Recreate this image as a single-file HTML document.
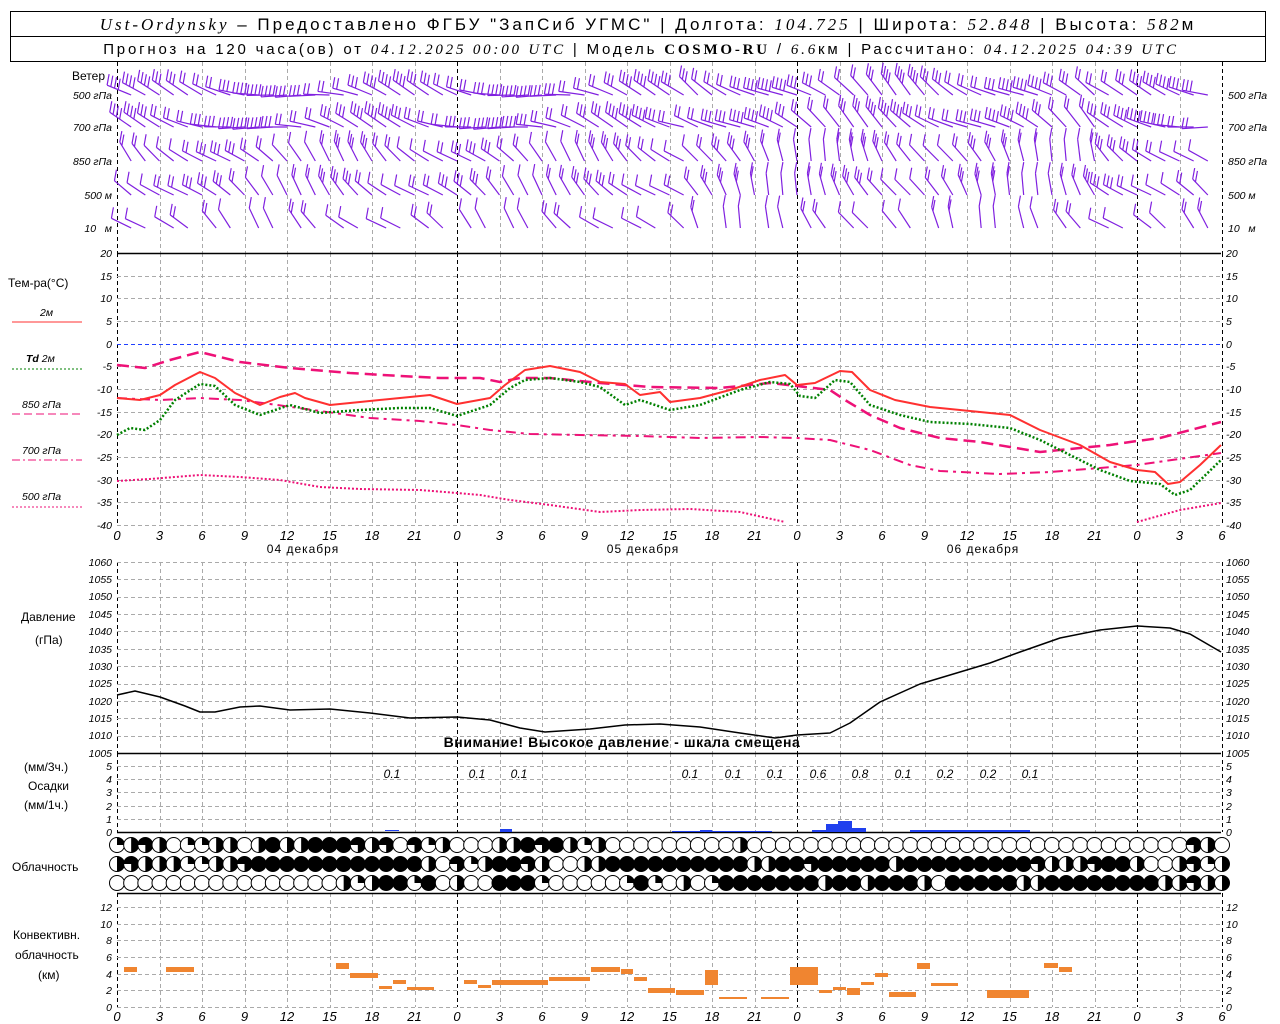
<!DOCTYPE html>
<html><head><meta charset="utf-8"><style>
body{margin:0;background:#fff}
svg{display:block;font-family:"Liberation Sans",sans-serif}
.t{font-size:12px;fill:#000}
.n{font-size:10.5px;font-style:italic;fill:#000;font-family:"Liberation Sans",sans-serif}
.l{text-anchor:end}
.x{font-size:13px;font-style:italic;text-anchor:middle;fill:#000}
.p{font-size:12px;font-style:italic;text-anchor:middle}
</style></head><body>
<svg id="s" width="1280" height="1024" xmlns="http://www.w3.org/2000/svg">
<rect x="10.5" y="11.5" width="1255" height="50" fill="none" stroke="#000"/>
<line x1="10" y1="36.5" x2="1266" y2="36.5" stroke="#000"/>
<text x="648" y="30" text-anchor="middle" style="font-size:17px;letter-spacing:3px"><tspan font-style="italic" font-family="Liberation Serif">Ust-Ordynsky</tspan> – Предоставлено ФГБУ "ЗапСиб УГМС" | Долгота: <tspan font-style="italic" font-family="Liberation Serif">104.725</tspan> | Широта: <tspan font-style="italic" font-family="Liberation Serif">52.848</tspan> | Высота: <tspan font-style="italic" font-family="Liberation Serif">582</tspan>м</text>
<text x="641" y="54" text-anchor="middle" style="font-size:15px;letter-spacing:2.8px"><tspan>Прогноз на 120 часа(ов) от </tspan><tspan font-style="italic" font-family="Liberation Serif">04.12.2025 00:00 UTC</tspan> | Модель <tspan font-weight="bold" font-family="Liberation Serif">COSMO-RU</tspan> / <tspan font-style="italic" font-family="Liberation Serif">6.6</tspan>км | Рассчитано: <tspan font-style="italic" font-family="Liberation Serif">04.12.2025 04:39 UTC</tspan></text>
<g id="g"></g>
<text class="t" x="72" y="80">Ветер</text>
<text class="n l" x="112" y="99">500 гПа</text><text class="n l" x="112" y="131">700 гПа</text><text class="n l" x="112" y="165">850 гПа</text><text class="n l" x="112" y="199">500 м</text><text class="n l" x="112" y="232">10 &#160; м</text>
<text class="n" x="1228" y="99">500 гПа</text><text class="n" x="1228" y="131">700 гПа</text><text class="n" x="1228" y="165">850 гПа</text><text class="n" x="1228" y="199">500 м</text><text class="n" x="1228" y="232">10 &#160; м</text>
<text class="t" x="8" y="287">Тем-ра(°C)</text>
<text class="n" x="40" y="316">2м</text>
<text class="n" x="26" y="362"><tspan font-weight="bold">Td</tspan> 2м</text>
<text class="n" x="22" y="408">850 гПа</text>
<text class="n" x="22" y="454">700 гПа</text>
<text class="n" x="22" y="500">500 гПа</text>
<line x1="12" y1="322" x2="82" y2="322" stroke="#ff3030"/>
<line x1="12" y1="369" x2="82" y2="369" stroke="#008000" stroke-dasharray="2,2"/>
<line x1="12" y1="414" x2="82" y2="414" stroke="#ee1177" stroke-dasharray="8,4"/>
<line x1="12" y1="460" x2="82" y2="460" stroke="#ee1177" stroke-dasharray="8,3,2,3"/>
<line x1="12" y1="507" x2="82" y2="507" stroke="#ee1177" stroke-dasharray="2,2"/>
<g class="n">
<text class="l" x="112" y="257">20</text><text class="l" x="112" y="280">15</text><text class="l" x="112" y="302">10</text><text class="l" x="112" y="325">5</text><text class="l" x="112" y="348">0</text><text class="l" x="112" y="370">-5</text><text class="l" x="112" y="393">-10</text><text class="l" x="112" y="416">-15</text><text class="l" x="112" y="438">-20</text><text class="l" x="112" y="461">-25</text><text class="l" x="112" y="484">-30</text><text class="l" x="112" y="506">-35</text><text class="l" x="112" y="529">-40</text>
<text x="1226" y="257">20</text><text x="1226" y="280">15</text><text x="1226" y="302">10</text><text x="1226" y="325">5</text><text x="1226" y="348">0</text><text x="1226" y="370">-5</text><text x="1226" y="393">-10</text><text x="1226" y="416">-15</text><text x="1226" y="438">-20</text><text x="1226" y="461">-25</text><text x="1226" y="484">-30</text><text x="1226" y="506">-35</text><text x="1226" y="529">-40</text>
<text class="l" x="112" y="566">1060</text><text class="l" x="112" y="583">1055</text><text class="l" x="112" y="600">1050</text><text class="l" x="112" y="618">1045</text><text class="l" x="112" y="635">1040</text><text class="l" x="112" y="653">1035</text><text class="l" x="112" y="670">1030</text><text class="l" x="112" y="687">1025</text><text class="l" x="112" y="705">1020</text><text class="l" x="112" y="722">1015</text><text class="l" x="112" y="739">1010</text><text class="l" x="112" y="757">1005</text>
<text x="1226" y="566">1060</text><text x="1226" y="583">1055</text><text x="1226" y="600">1050</text><text x="1226" y="618">1045</text><text x="1226" y="635">1040</text><text x="1226" y="653">1035</text><text x="1226" y="670">1030</text><text x="1226" y="687">1025</text><text x="1226" y="705">1020</text><text x="1226" y="722">1015</text><text x="1226" y="739">1010</text><text x="1226" y="757">1005</text>
<text class="l" x="112" y="770">5</text><text class="l" x="112" y="783">4</text><text class="l" x="112" y="796">3</text><text class="l" x="112" y="810">2</text><text class="l" x="112" y="823">1</text><text class="l" x="112" y="836">0</text>
<text x="1226" y="770">5</text><text x="1226" y="783">4</text><text x="1226" y="796">3</text><text x="1226" y="810">2</text><text x="1226" y="823">1</text><text x="1226" y="836">0</text>
<text class="l" x="112" y="911">12</text><text class="l" x="112" y="928">10</text><text class="l" x="112" y="944">8</text><text class="l" x="112" y="961">6</text><text class="l" x="112" y="978">4</text><text class="l" x="112" y="994">2</text><text class="l" x="112" y="1011">0</text>
<text x="1226" y="911">12</text><text x="1226" y="928">10</text><text x="1226" y="944">8</text><text x="1226" y="961">6</text><text x="1226" y="978">4</text><text x="1226" y="994">2</text><text x="1226" y="1011">0</text>
</g>
<g class="x">
<text x="117" y="540">0</text><text x="159.5" y="540">3</text><text x="202" y="540">6</text><text x="244.5" y="540">9</text><text x="287" y="540">12</text><text x="329.5" y="540">15</text><text x="372" y="540">18</text><text x="414.5" y="540">21</text><text x="457" y="540">0</text><text x="499.5" y="540">3</text><text x="542" y="540">6</text><text x="584.5" y="540">9</text><text x="627" y="540">12</text><text x="669.5" y="540">15</text><text x="712" y="540">18</text><text x="754.5" y="540">21</text><text x="797" y="540">0</text><text x="839.5" y="540">3</text><text x="882" y="540">6</text><text x="924.5" y="540">9</text><text x="967" y="540">12</text><text x="1009.5" y="540">15</text><text x="1052" y="540">18</text><text x="1094.5" y="540">21</text><text x="1137" y="540">0</text><text x="1179.5" y="540">3</text><text x="1222" y="540">6</text>
<text x="117" y="1021">0</text><text x="159.5" y="1021">3</text><text x="202" y="1021">6</text><text x="244.5" y="1021">9</text><text x="287" y="1021">12</text><text x="329.5" y="1021">15</text><text x="372" y="1021">18</text><text x="414.5" y="1021">21</text><text x="457" y="1021">0</text><text x="499.5" y="1021">3</text><text x="542" y="1021">6</text><text x="584.5" y="1021">9</text><text x="627" y="1021">12</text><text x="669.5" y="1021">15</text><text x="712" y="1021">18</text><text x="754.5" y="1021">21</text><text x="797" y="1021">0</text><text x="839.5" y="1021">3</text><text x="882" y="1021">6</text><text x="924.5" y="1021">9</text><text x="967" y="1021">12</text><text x="1009.5" y="1021">15</text><text x="1052" y="1021">18</text><text x="1094.5" y="1021">21</text><text x="1137" y="1021">0</text><text x="1179.5" y="1021">3</text><text x="1222" y="1021">6</text>
</g>
<text class="t" x="303" y="553" text-anchor="middle" style="letter-spacing:1px">04 декабря</text>
<text class="t" x="643" y="553" text-anchor="middle" style="letter-spacing:1px">05 декабря</text>
<text class="t" x="983" y="553" text-anchor="middle" style="letter-spacing:1px">06 декабря</text>
<text class="t" x="21" y="621">Давление</text>
<text class="t" x="35" y="644">(гПа)</text>
<text x="622" y="747" text-anchor="middle" style="font-size:14px;font-weight:bold;letter-spacing:0.6px">Внимание! Высокое давление - шкала смещена</text>
<text class="t" x="24" y="771">(мм/3ч.)</text>
<text class="t" x="28" y="790">Осадки</text>
<text class="t" x="24" y="809">(мм/1ч.)</text>
<g class="p">
<text x="392" y="778">0.1</text><text x="477" y="778">0.1</text><text x="519" y="778">0.1</text><text x="690" y="778">0.1</text><text x="733" y="778">0.1</text><text x="775" y="778">0.1</text><text x="818" y="778">0.6</text><text x="860" y="778">0.8</text><text x="903" y="778">0.1</text><text x="945" y="778">0.2</text><text x="988" y="778">0.2</text><text x="1030" y="778">0.1</text>
</g>
<text class="t" x="12" y="871">Облачность</text>
<text class="t" x="13" y="939">Конвективн.</text>
<text class="t" x="15" y="959">облачность</text>
<text class="t" x="38" y="979">(км)</text>
</svg>
<script>
var g=document.getElementById('g'),NS='http://www.w3.org/2000/svg';
function E(t,a){var e=document.createElementNS(NS,t);for(var k in a)e.setAttribute(k,a[k]);g.appendChild(e);return e}
function L(x1,y1,x2,y2,c,w,d){E('line',{x1:x1,y1:y1,x2:x2,y2:y2,stroke:c||'#000','stroke-width':w||1,'stroke-dasharray':d||'none'})}
var X=function(h){return 117+h*340/24};
var panels=[[62,253],[253,525],[562,753],[753,832],[893,1007]];
panels.forEach(function(p){for(var h=0;h<=78;h+=3){var x=Math.round(X(h))+.5;var day=(h%24==0)||h==78;L(x,p[0],x,p[1],day?'#000':'#aaa',1,'4,3')}});
for(var i=0;i<=12;i++){var y=Math.round(253+i*272/12)+.5;L(117,y,1221,y,i==4?'#2040ff':'#aaa',1,'4,3')}
for(var i=0;i<=11;i++){var y=Math.round(562+i*191/11)+.5;L(117,y,1221,y,'#aaa',1,'4,3')}
for(var i=0;i<=5;i++){var y=Math.round(766+i*13.2)+.5;L(117,y,1221,y,'#aaa',1,'4,3')}
for(var i=0;i<=6;i++){var y=Math.round(907+i*16.67)+.5;L(117,y,1221,y,'#aaa',1,'4,3')}
[253.5,753.5,832.5,893.5].forEach(function(y){L(117,y,1221,y,'#000',1.5)});
function P(pts,c,w,d){E('polyline',{points:pts,fill:'none',stroke:c,'stroke-width':w,'stroke-dasharray':d||'none','stroke-linejoin':'round'})}
var M='#ee1177';
P('117,481 150,479 200,475 240,477 280,480 320,487 360,489 420,490 457,493 480,495 510,500 550,505 600,512 640,510 690,509 740,512 785,522',M,2,'2,2');
P('1137,522 1180,510 1221,503',M,2,'2,2');
P('117,398 160,400 200,398 240,400 270,404 320,411 370,418 420,421 457,425 490,430 530,434 580,435 640,436 700,438 760,437 797,438 830,440 870,450 910,465 940,471 1000,474 1050,472 1100,468 1137,465 1221,453',M,2,'10,5,3,5');
P('117,365 145,368 170,360 200,352 240,362 290,368 350,373 400,376 440,378 480,378 500,382 520,378 550,378 600,383 650,387 720,388 770,383 797,386 830,390 845,400 870,415 900,428 940,438 980,442 1010,447 1040,452 1080,448 1110,445 1137,441 1160,438 1221,422',M,2.5,'12,6');
P('117,435 130,428 145,430 160,420 175,400 200,384 215,386 235,405 260,415 290,405 320,413 360,410 400,408 430,408 457,416 490,405 510,388 525,380 550,378 580,382 600,387 625,405 640,400 670,410 700,405 740,390 770,382 790,384 800,396 815,398 835,380 850,382 870,405 900,415 930,422 970,424 1010,428 1040,440 1070,455 1100,470 1130,481 1160,484 1175,495 1190,490 1221,460','#008000',2.5,'2,2');
P('117,398 140,400 160,395 175,385 200,372 215,378 235,393 260,405 280,397 295,393 305,398 330,405 360,402 400,398 430,395 457,404 490,398 505,385 525,370 550,366 580,372 600,382 625,384 640,395 660,392 670,402 700,398 730,390 760,380 785,375 797,385 815,383 840,371 852,372 870,390 895,400 930,407 960,410 990,413 1010,415 1040,430 1080,445 1110,462 1137,470 1155,472 1168,484 1180,482 1200,465 1221,445','#ff3030',2);
P('117,695 135,691 160,697 185,706 200,712 215,712 240,707 260,706 290,710 330,709 370,713 410,718 457,717 490,720 520,728 545,732 590,729 625,725 660,724 700,727 740,733 775,738 797,735 830,733 850,723 880,702 920,684 960,672 990,663 1020,652 1060,638 1100,630 1137,626 1170,628 1190,634 1221,652','#000',1.5);
[[826,824,12,8],[838,821,14,11],[852,828,14,4],[812,830,14,2],[500,829,12,3],[700,830,12,2],[385,830,14,1],[910,830,120,2],[672,831,100,1]].forEach(function(r){E('rect',{x:r[0],y:r[1],width:r[2],height:r[3],fill:'#2040ee'})});
[[124,967,13,5],[166,967,28,5],[336,963,13,6],[350,973,28,5],[379,986,13,3],[393,980,13,4],[407,987,27,3],[464,980,13,4],[478,985,13,3],[492,980,56,5],[549,977,41,4],[591,967,29,5],[621,969,12,5],[634,977,13,4],[648,988,27,5],[676,990,28,5],[705,970,13,15],[719,997,28,2],[761,997,28,2],[790,967,28,18],[819,990,13,3],[833,987,13,3],[847,988,13,7],[861,982,13,3],[875,973,13,4],[889,992,27,5],[917,963,13,6],[931,983,27,3],[987,990,42,8],[1044,963,14,5],[1059,967,13,5]].forEach(function(r){E('rect',{x:r[0],y:r[1],width:r[2],height:r[3],fill:'#f08530'})});
var rows=[
"1232011220242244432303120002243421200000000020000000000000000000000000000000320",
"2322211223444444444444203124432002244444444442244344444244444444432223442002312",
"0000000000000000212441402004441000001410201444444424424442044444224444444422322"];
var ry=[845,864,883];
rows.forEach(function(s,r){for(var i=0;i<=78;i++){var v=+s[i]||0,cx=X(i),cy=ry[r],R=7.5;
E('circle',{cx:cx,cy:cy,r:R,fill:v==4?'#000':'#fff',stroke:'#000','stroke-width':1});
if(v==1)E('path',{d:'M'+cx+' '+cy+'V'+(cy-R)+'A'+R+' '+R+' 0 0 1 '+(cx+R)+' '+cy+'Z'});
if(v==2)E('path',{d:'M'+cx+' '+(cy-R)+'A'+R+' '+R+' 0 0 1 '+cx+' '+(cy+R)+'Z'});
if(v==3)E('path',{d:'M'+cx+' '+cy+'H'+(cx-R)+'A'+R+' '+R+' 0 1 1 '+cx+' '+(cy+R)+'Z'});
}});
var lv=[[95,3],[127,3],[161,2],[195,2],[228,1]];
var C='#8020e0';
lv.forEach(function(l,k){for(var i=1;i<78;i++){var x=X(i),y=l[0];
 var a=(k<2?15:45)+20*Math.sin(i*0.37+k)+(i>40&&i<70?20:0);if(k==4&&(i%3==0))continue;
 var rad=a*Math.PI/180,Ls=k<2?26:22;var tx=x-Ls*Math.cos(rad),ty=y-Ls*Math.sin(rad);
 L(x,y,tx,ty,C,1.2);var n=Math.max(1,Math.round(l[1]+Math.sin(i*0.7+k)));
 for(var j=0;j<n;j++){var fx=tx+j*4*Math.cos(rad),fy=ty+j*4*Math.sin(rad);L(fx,fy,fx+2,fy-11,C,1.2)}
}});
</script>
</body></html>
